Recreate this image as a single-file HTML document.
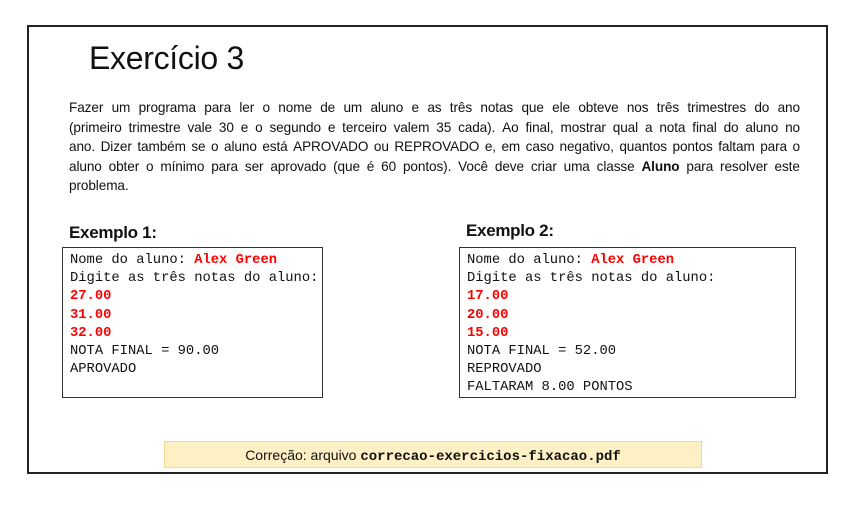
<!DOCTYPE html>
<html><head><meta charset="utf-8"><style>
body{margin:0;width:854px;height:511px;background:#fff;position:relative;font-family:"Liberation Sans",sans-serif;overflow:hidden}
.frame{position:absolute;left:27px;top:25px;width:797px;height:445px;border:2px solid #222}
.t{position:absolute;left:89px;top:40px;font-size:32px;color:#111;letter-spacing:-0.3px}
.p{position:absolute;left:69px;top:98px;width:731px;font-size:13.6px;line-height:19.6px;color:#111;letter-spacing:-0.1px}
.p div{text-align:justify;text-align-last:justify;white-space:nowrap;word-spacing:0}
.p div.l{text-align-last:left}
.h{position:absolute;font-size:17px;font-weight:bold;color:#111;letter-spacing:-0.3px}
.box{position:absolute;top:247px;height:151px;border:1.5px solid #333;font-family:"Liberation Mono",monospace;font-size:13.8px;line-height:18.2px;color:#111;padding:4px 0 0 7px;box-sizing:border-box;white-space:pre}
.r{color:#f00;font-weight:bold}
.y{position:absolute;left:164px;top:441px;width:538px;height:27px;background:#fdf0c4;border:1px solid #f4d98c;box-sizing:border-box;text-align:center;font-size:14px;line-height:26px;color:#111}
.y b{font-family:"Liberation Mono",monospace;font-size:14px}
</style></head><body>
<div class="frame"></div>
<div class="t">Exercício 3</div>
<div class="p">
<div style="display:flex;justify-content:space-between"><span>Fazer</span><span>um</span><span>programa</span><span>para</span><span>ler</span><span>o</span><span>nome</span><span>de</span><span>um</span><span>aluno</span><span>e</span><span>as</span><span>três</span><span>notas</span><span>que</span><span>ele</span><span>obteve</span><span>nos</span><span>três</span><span>trimestres</span><span>do</span><span>ano</span></div>
<div style="display:flex;justify-content:space-between"><span>(primeiro</span><span>trimestre</span><span>vale</span><span>30</span><span>e</span><span>o</span><span>segundo</span><span>e</span><span>terceiro</span><span>valem</span><span>35</span><span>cada).</span><span>Ao</span><span>final,</span><span>mostrar</span><span>qual</span><span>a</span><span>nota</span><span>final</span><span>do</span><span>aluno</span><span>no</span></div>
<div style="display:flex;justify-content:space-between"><span>ano.</span><span>Dizer</span><span>também</span><span>se</span><span>o</span><span>aluno</span><span>está</span><span>APROVADO</span><span>ou</span><span>REPROVADO</span><span>e,</span><span>em</span><span>caso</span><span>negativo,</span><span>quantos</span><span>pontos</span><span>faltam</span><span>para</span><span>o</span></div>
<div style="display:flex;justify-content:space-between"><span>aluno</span><span>obter</span><span>o</span><span>mínimo</span><span>para</span><span>ser</span><span>aprovado</span><span>(que</span><span>é</span><span>60</span><span>pontos).</span><span>Você</span><span>deve</span><span>criar</span><span>uma</span><span>classe</span><span><b>Aluno</b></span><span>para</span><span>resolver</span><span>este</span></div>
<div class="l">problema.</div>
</div>
<div class="h" style="left:69px;top:223px">Exemplo 1:</div>
<div class="h" style="left:466px;top:221px">Exemplo 2:</div>
<div class="box" style="left:62px;width:261px">Nome do aluno: <span class="r">Alex Green</span>
Digite as três notas do aluno:
<span class="r">27.00</span>
<span class="r">31.00</span>
<span class="r">32.00</span>
NOTA FINAL = 90.00
APROVADO</div>
<div class="box" style="left:459px;width:337px">Nome do aluno: <span class="r">Alex Green</span>
Digite as três notas do aluno:
<span class="r">17.00</span>
<span class="r">20.00</span>
<span class="r">15.00</span>
NOTA FINAL = 52.00
REPROVADO
FALTARAM 8.00 PONTOS</div>
<div class="y">Correção: arquivo <b>correcao-exercicios-fixacao.pdf</b></div>
</body></html>
